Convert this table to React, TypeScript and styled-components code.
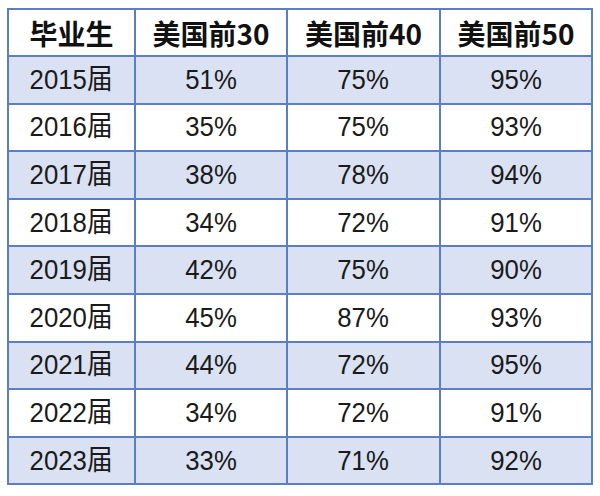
import React from "react";
import styled, { createGlobalStyle } from "styled-components";

const Global = createGlobalStyle`
  html, body { margin: 0; padding: 0; background: #ffffff; }
  body { width: 600px; height: 496px; overflow: hidden; }
`;

const Page = styled.div`
  padding: 8px 0 0 7px;
`;

const Table = styled.table`
  border-collapse: collapse;
  table-layout: fixed;
  width: 584px;
  border: 2px solid #5b7ec6;
`;

const Row = styled.tr<{ $shaded?: boolean; $head?: boolean }>`
  height: ${(p) => (p.$head ? "47px" : "47.6px")};
  background: ${(p) => (p.$shaded ? "#d9e1f2" : "#ffffff")};
`;

const HeadCell = styled.th`
  border: 2px solid #5b7ec6;
  padding: 0;
  text-align: center;
  vertical-align: middle;
  font-family: "Noto Sans CJK SC", "Noto Sans", sans-serif;
  font-weight: 700;
  font-size: 28px;
  line-height: 1;
  color: #111111;
`;

const Cell = styled.td`
  border: 2px solid #5b7ec6;
  padding: 0;
  text-align: center;
  vertical-align: middle;
  font-family: "Liberation Sans", "Noto Sans CJK SC", sans-serif;
  font-weight: 400;
  font-size: 28px;
  line-height: 1;
  color: #1a1a1a;
`;

const Value = styled.span`
  display: inline-block;
  transform: scaleX(0.92);
`;

const rows: [string, string, string, string][] = [
  ["2015届", "51%", "75%", "95%"],
  ["2016届", "35%", "75%", "93%"],
  ["2017届", "38%", "78%", "94%"],
  ["2018届", "34%", "72%", "91%"],
  ["2019届", "42%", "75%", "90%"],
  ["2020届", "45%", "87%", "93%"],
  ["2021届", "44%", "72%", "95%"],
  ["2022届", "34%", "72%", "91%"],
  ["2023届", "33%", "71%", "92%"],
];

export default function App() {
  return (
    <Page>
      <Global />
      <Table>
        <colgroup>
          <col style={{ width: 127 }} />
          <col style={{ width: 152 }} />
          <col style={{ width: 153 }} />
          <col style={{ width: 152 }} />
        </colgroup>
        <thead>
          <Row $head>
            <HeadCell>毕业生</HeadCell>
            <HeadCell>美国前30</HeadCell>
            <HeadCell>美国前40</HeadCell>
            <HeadCell>美国前50</HeadCell>
          </Row>
        </thead>
        <tbody>
          {rows.map((r, i) => (
            <Row key={r[0]} $shaded={i % 2 === 0}>
              {r.map((v, j) => (
                <Cell key={j}>
                  <Value>{v}</Value>
                </Cell>
              ))}
            </Row>
          ))}
        </tbody>
      </Table>
    </Page>
  );
}
